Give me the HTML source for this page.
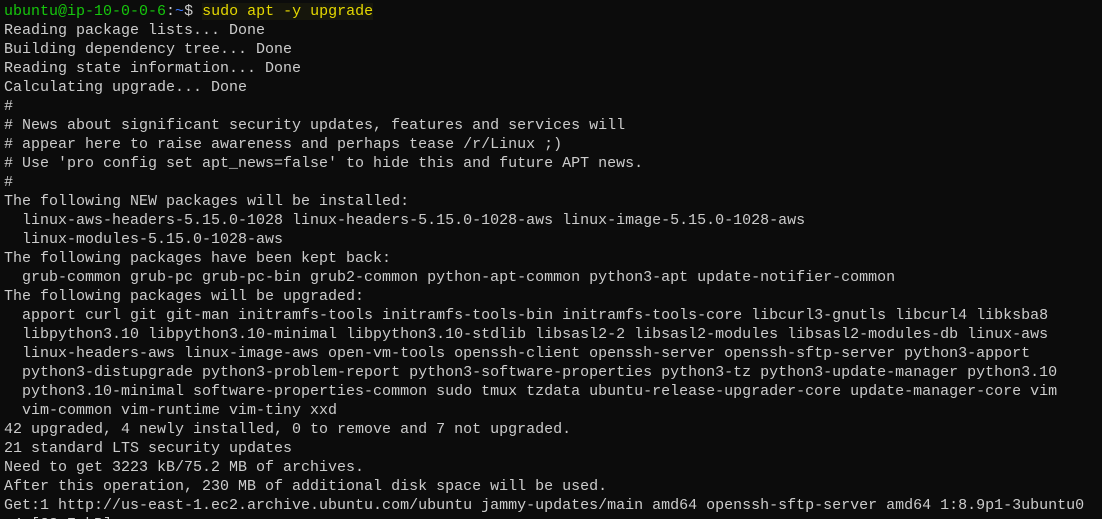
<!DOCTYPE html>
<html><head><meta charset="utf-8"><style>
html,body{margin:0;padding:0;background:#0c0c0c;width:1102px;height:519px;overflow:hidden}
pre{margin:0;padding:2px 0 0 4px;font-family:"Liberation Mono",monospace;font-size:15px;line-height:19px;color:#cccccc;white-space:pre}
.g{color:#16c60c}.b{color:#3b78ff}.y{color:#e5d800;background:#16160c}
</style></head><body><pre><span class="g">ubuntu@ip-10-0-0-6</span>:<span class="b">~</span>$ <span class="y">sudo apt -y upgrade</span>
Reading package lists... Done
Building dependency tree... Done
Reading state information... Done
Calculating upgrade... Done
#
# News about significant security updates, features and services will
# appear here to raise awareness and perhaps tease /r/Linux ;)
# Use 'pro config set apt_news=false' to hide this and future APT news.
#
The following NEW packages will be installed:
  linux-aws-headers-5.15.0-1028 linux-headers-5.15.0-1028-aws linux-image-5.15.0-1028-aws
  linux-modules-5.15.0-1028-aws
The following packages have been kept back:
  grub-common grub-pc grub-pc-bin grub2-common python-apt-common python3-apt update-notifier-common
The following packages will be upgraded:
  apport curl git git-man initramfs-tools initramfs-tools-bin initramfs-tools-core libcurl3-gnutls libcurl4 libksba8
  libpython3.10 libpython3.10-minimal libpython3.10-stdlib libsasl2-2 libsasl2-modules libsasl2-modules-db linux-aws
  linux-headers-aws linux-image-aws open-vm-tools openssh-client openssh-server openssh-sftp-server python3-apport
  python3-distupgrade python3-problem-report python3-software-properties python3-tz python3-update-manager python3.10
  python3.10-minimal software-properties-common sudo tmux tzdata ubuntu-release-upgrader-core update-manager-core vim
  vim-common vim-runtime vim-tiny xxd
42 upgraded, 4 newly installed, 0 to remove and 7 not upgraded.
21 standard LTS security updates
Need to get 3223 kB/75.2 MB of archives.
After this operation, 230 MB of additional disk space will be used.
Get:1 http://us-east-1.ec2.archive.ubuntu.com/ubuntu jammy-updates/main amd64 openssh-sftp-server amd64 1:8.9p1-3ubuntu0
.4 [38.7 kB]</pre></body></html>
